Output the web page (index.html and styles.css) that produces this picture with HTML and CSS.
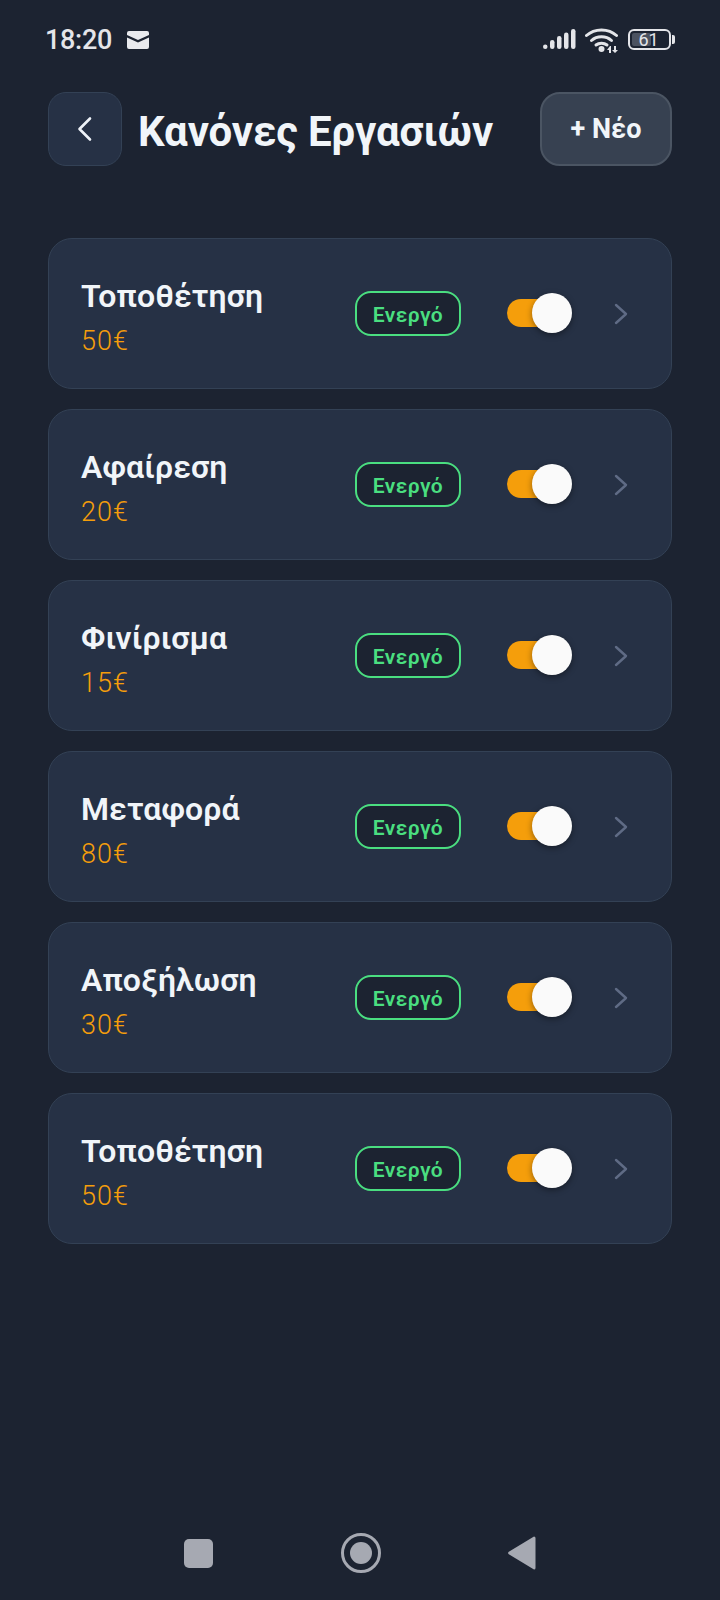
FILE: index.html
```html
<!DOCTYPE html>
<html lang="el">
<head>
    <meta charset="UTF-8">
    <meta name="viewport" content="width=device-width, initial-scale=1.0">
    <title>Κανόνες Εργασιών</title>
    <link rel="stylesheet" href="styles.css">
</head>
<body>
    <div class="status-bar">
        <div class="status-left">
            <span class="time">18:20</span>
            <svg class="mail" width="22" height="18" viewBox="0 0 22 18"><path fill="#e9eaee" d="M2 0h18a2 2 0 0 1 2 2v2l-11 5L0 4V2a2 2 0 0 1 2-2zM0 6.500l11 5 11-5V16a2 2 0 0 1-2 2H2a2 2 0 0 1-2-2z"/></svg>
        </div>
        <div class="status-right">
            <svg width="33" height="21" viewBox="0 0 33 21"><g fill="#e4e5e9"><rect x="0" y="15.500" width="4.500" height="4.500" rx="2.200"/><rect x="7" y="11" width="4.500" height="9" rx="2.200"/><rect x="14" y="7" width="4.500" height="13" rx="2.200"/><rect x="21" y="3.500" width="4.500" height="16.500" rx="2.200"/><rect x="28" y="0" width="4.500" height="20" rx="2.200"/></g></svg>
            <svg width="34" height="26" viewBox="0 0 34 26"><g fill="none" stroke="#e4e5e9" stroke-width="3" stroke-linecap="round"><path d="M1.500 8.500C9.500 1 23.500 1 31.500 8.500"/><path d="M6.500 13.500c5.500-5 14.500-5 20 0"/><path d="M11 18c3-2.500 8-2.500 11 0"/></g><circle cx="16.500" cy="22" r="3" fill="#e4e5e9"/><path fill="#e4e5e9" d="M25 19l-3 4h2v3h2v-7zM29 19h2v4h2l-3 3-3-3h2z"/></svg>
            <div class="battery">
                <div class="battery-body">
                    <span class="battery-level"></span>
                    <span class="battery-text">61</span>
                </div>
                <span class="battery-nub"></span>
            </div>
        </div>
    </div>

    <header class="top-bar">
        <button class="back-btn" type="button">
            <svg width="16" height="26" viewBox="0 0 16 26"><path d="M13 2.500 2.500 13 13 23.500" fill="none" stroke="#eef2f8" stroke-width="2.600" stroke-linecap="round" stroke-linejoin="round"/></svg>
        </button>
        <h1>Κανόνες Εργασιών</h1>
        <button class="new-btn" type="button">+ Νέο</button>
    </header>

    <main class="rule-list">
        <div class="rule-card">
            <div class="rule-info">
                <div class="rule-name">Τοποθέτηση</div>
                <div class="rule-price">50€</div>
            </div>
            <span class="badge">Ενεργό</span>
            <div class="toggle"><span class="knob"></span></div>
            <svg class="chevron" width="14" height="22" viewBox="0 0 14 22"><path d="M2 2l10 9-10 9" fill="none" stroke="#5f6b85" stroke-width="2.400" stroke-linecap="round" stroke-linejoin="round"/></svg>
        </div>
        <div class="rule-card">
            <div class="rule-info">
                <div class="rule-name">Αφαίρεση</div>
                <div class="rule-price">20€</div>
            </div>
            <span class="badge">Ενεργό</span>
            <div class="toggle"><span class="knob"></span></div>
            <svg class="chevron" width="14" height="22" viewBox="0 0 14 22"><path d="M2 2l10 9-10 9" fill="none" stroke="#5f6b85" stroke-width="2.400" stroke-linecap="round" stroke-linejoin="round"/></svg>
        </div>
        <div class="rule-card">
            <div class="rule-info">
                <div class="rule-name">Φινίρισμα</div>
                <div class="rule-price">15€</div>
            </div>
            <span class="badge">Ενεργό</span>
            <div class="toggle"><span class="knob"></span></div>
            <svg class="chevron" width="14" height="22" viewBox="0 0 14 22"><path d="M2 2l10 9-10 9" fill="none" stroke="#5f6b85" stroke-width="2.400" stroke-linecap="round" stroke-linejoin="round"/></svg>
        </div>
        <div class="rule-card">
            <div class="rule-info">
                <div class="rule-name">Μεταφορά</div>
                <div class="rule-price">80€</div>
            </div>
            <span class="badge">Ενεργό</span>
            <div class="toggle"><span class="knob"></span></div>
            <svg class="chevron" width="14" height="22" viewBox="0 0 14 22"><path d="M2 2l10 9-10 9" fill="none" stroke="#5f6b85" stroke-width="2.400" stroke-linecap="round" stroke-linejoin="round"/></svg>
        </div>
        <div class="rule-card">
            <div class="rule-info">
                <div class="rule-name">Αποξήλωση</div>
                <div class="rule-price">30€</div>
            </div>
            <span class="badge">Ενεργό</span>
            <div class="toggle"><span class="knob"></span></div>
            <svg class="chevron" width="14" height="22" viewBox="0 0 14 22"><path d="M2 2l10 9-10 9" fill="none" stroke="#5f6b85" stroke-width="2.400" stroke-linecap="round" stroke-linejoin="round"/></svg>
        </div>
        <div class="rule-card">
            <div class="rule-info">
                <div class="rule-name">Τοποθέτηση</div>
                <div class="rule-price">50€</div>
            </div>
            <span class="badge">Ενεργό</span>
            <div class="toggle"><span class="knob"></span></div>
            <svg class="chevron" width="14" height="22" viewBox="0 0 14 22"><path d="M2 2l10 9-10 9" fill="none" stroke="#5f6b85" stroke-width="2.400" stroke-linecap="round" stroke-linejoin="round"/></svg>
        </div>
    </main>

    <nav class="nav-bar">
        <span class="nav-square"></span>
        <span class="nav-circle"><span class="nav-dot"></span></span>
        <svg width="28" height="34" viewBox="0 0 28 34"><path fill="#a6a9b2" d="M26 .6a1.500 1.500 0 0 1 1.500 1.500v29.800a1.500 1.500 0 0 1-1.500 1.500L.8 18.200a1.400 1.400 0 0 1 0-2.400z"/></svg>
    </nav>
</body>
</html>
```

FILE: styles.css
```css
* {
    box-sizing: border-box;
}
body {
    margin: 0;
    width: 720px;
    height: 1600px;
    background: #1c2331;
    font-family: Roboto, "Noto Sans", sans-serif;
    color: #f1f5f9;
    display: flex;
    flex-direction: column;
    overflow: hidden;
}
.status-bar {
    height: 78px;
    padding: 1px 45px 0 45px;
    display: flex;
    justify-content: space-between;
    align-items: center;
}
.status-left {
    display: flex;
    align-items: center;
    gap: 15px;
}
.time {
    font-size: 27px;
    font-weight: 500;
    letter-spacing: -0.3px;
    color: #e4e5e9;
}
.status-right {
    display: flex;
    align-items: center;
    gap: 9px;
}
.battery {
    display: flex;
    align-items: center;
    gap: 1px;
}
.battery-body {
    position: relative;
    width: 43px;
    height: 21px;
    border: 2px solid #e4e5e9;
    border-radius: 6px;
    padding: 2px;
}
.battery-level {
    display: block;
    width: 55%;
    height: 100%;
    background: #4b5260;
    border-radius: 2px;
}
.battery-text {
    position: absolute;
    top: 0;
    left: 0;
    right: 2px;
    line-height: 17px;
    text-align: center;
    font-size: 18px;
    color: #e4e5e9;
}
.battery-nub {
    width: 3px;
    height: 9px;
    background: #e4e5e9;
    border-radius: 0 2px 2px 0;
}
.top-bar {
    margin-top: 14px;
    padding: 0 48px;
    display: flex;
    align-items: center;
}
.back-btn {
    width: 74px;
    height: 74px;
    padding: 0;
    background: #263145;
    border: 1px solid #334155;
    border-radius: 18px;
    display: flex;
    align-items: center;
    justify-content: center;
}
h1 {
    flex: 1;
    margin: 0 0 0 16px;
    padding-top: 4px;
    font-size: 42px;
    font-weight: 700;
    letter-spacing: -0.1px;
    color: #f1f5f9;
}
.new-btn {
    width: 132px;
    height: 74px;
    padding: 0;
    background: #374151;
    border: 2px solid #4b5563;
    border-radius: 20px;
    color: #f1f5f9;
    font-family: inherit;
    font-size: 27px;
    font-weight: 700;
}
.rule-list {
    margin-top: 72px;
    padding: 0 48px;
    display: flex;
    flex-direction: column;
    gap: 20px;
}
.rule-card {
    height: 151px;
    padding: 0 43px 0 32px;
    background: #263145;
    border: 1px solid #334155;
    border-radius: 24px;
    display: flex;
    align-items: center;
}
.rule-info {
    flex: 1;
    padding-top: 7px;
}
.rule-name {
    font-size: 32px;
    font-weight: 600;
    letter-spacing: 0.1px;
    color: #f1f5f9;
    line-height: 40px;
}
.rule-price {
    margin-top: 8px;
    font-size: 27px;
    font-weight: 300;
    letter-spacing: 1px;
    color: #f59e0b;
    line-height: 34px;
}
.badge {
    width: 106px;
    height: 45px;
    background: #1c2331;
    border: 2px solid #4ade80;
    border-radius: 16px;
    color: #4ade80;
    font-size: 21px;
    font-weight: 600;
    letter-spacing: 0.4px;
    line-height: 44px;
    text-align: center;
}
.toggle {
    position: relative;
    width: 60px;
    height: 28px;
    margin: 0 0 2px 46px;
    background: #f59e0b;
    border-radius: 14px;
}
.knob {
    position: absolute;
    top: -6px;
    right: -5px;
    width: 40px;
    height: 40px;
    background: #fafafa;
    border-radius: 50%;
    box-shadow: 0 2px 6px rgba(0, 0, 0, 0.4);
}
.chevron {
    margin-left: 47px;
}
.nav-bar {
    margin-top: auto;
    height: 94px;
    padding: 0 184px;
    display: flex;
    align-items: center;
    justify-content: space-between;
}
.nav-square {
    width: 29px;
    height: 29px;
    background: #a6a9b2;
    border-radius: 5px;
}
.nav-circle {
    width: 40px;
    height: 40px;
    border: 3px solid #a6a9b2;
    border-radius: 50%;
    display: flex;
    align-items: center;
    justify-content: center;
}
.nav-dot {
    width: 22px;
    height: 22px;
    background: #a6a9b2;
    border-radius: 50%;
}
```
